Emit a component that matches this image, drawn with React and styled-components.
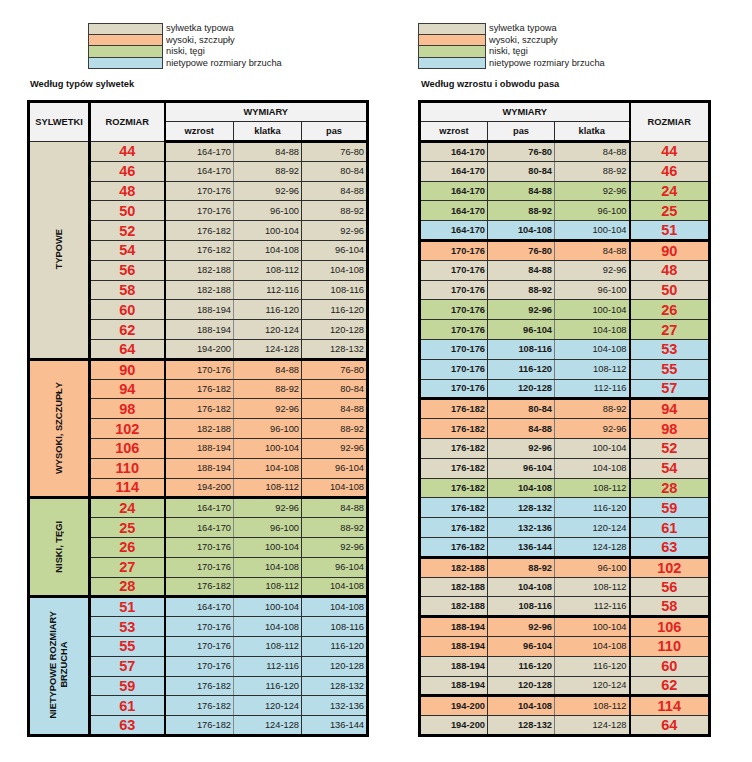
import styled, { createGlobalStyle } from 'styled-components';

const COLORS = {
  beige: '#ddd9c4',
  orange: '#f9be92',
  green: '#c4d79b',
  blue: '#b7dde8',
};

const legend = [
  { color: 'beige', label: 'sylwetka typowa' },
  { color: 'orange', label: 'wysoki, szczupły' },
  { color: 'green', label: 'niski, tęgi' },
  { color: 'blue', label: 'nietypowe rozmiary brzucha' },
];

// lewa tabela - wg typow sylwetek
const groups = [
  {
    name: ['TYPOWE'],
    color: 'beige',
    rows: [
      ['44', '164-170', '84-88', '76-80'],
      ['46', '164-170', '88-92', '80-84'],
      ['48', '170-176', '92-96', '84-88'],
      ['50', '170-176', '96-100', '88-92'],
      ['52', '176-182', '100-104', '92-96'],
      ['54', '176-182', '104-108', '96-104'],
      ['56', '182-188', '108-112', '104-108'],
      ['58', '182-188', '112-116', '108-116'],
      ['60', '188-194', '116-120', '116-120'],
      ['62', '188-194', '120-124', '120-128'],
      ['64', '194-200', '124-128', '128-132'],
    ],
  },
  {
    name: ['WYSOKI, SZCZUPŁY'],
    color: 'orange',
    rows: [
      ['90', '170-176', '84-88', '76-80'],
      ['94', '176-182', '88-92', '80-84'],
      ['98', '176-182', '92-96', '84-88'],
      ['102', '182-188', '96-100', '88-92'],
      ['106', '188-194', '100-104', '92-96'],
      ['110', '188-194', '104-108', '96-104'],
      ['114', '194-200', '108-112', '104-108'],
    ],
  },
  {
    name: ['NISKI, TĘGI'],
    color: 'green',
    rows: [
      ['24', '164-170', '92-96', '84-88'],
      ['25', '164-170', '96-100', '88-92'],
      ['26', '170-176', '100-104', '92-96'],
      ['27', '170-176', '104-108', '96-104'],
      ['28', '176-182', '108-112', '104-108'],
    ],
  },
  {
    name: ['NIETYPOWE ROZMIARY', 'BRZUCHA'],
    color: 'blue',
    rows: [
      ['51', '164-170', '100-104', '104-108'],
      ['53', '170-176', '104-108', '108-116'],
      ['55', '170-176', '108-112', '116-120'],
      ['57', '170-176', '112-116', '120-128'],
      ['59', '176-182', '116-120', '128-132'],
      ['61', '176-182', '120-124', '132-136'],
      ['63', '176-182', '124-128', '136-144'],
    ],
  },
];

// prawa tabela - wg wzrostu i pasa: [wzrost, pas, klatka, rozmiar, kolor]
const heightGroups = [
  [
    ['164-170', '76-80', '84-88', '44', 'beige'],
    ['164-170', '80-84', '88-92', '46', 'beige'],
    ['164-170', '84-88', '92-96', '24', 'green'],
    ['164-170', '88-92', '96-100', '25', 'green'],
    ['164-170', '104-108', '100-104', '51', 'blue'],
  ],
  [
    ['170-176', '76-80', '84-88', '90', 'orange'],
    ['170-176', '84-88', '92-96', '48', 'beige'],
    ['170-176', '88-92', '96-100', '50', 'beige'],
    ['170-176', '92-96', '100-104', '26', 'green'],
    ['170-176', '96-104', '104-108', '27', 'green'],
    ['170-176', '108-116', '104-108', '53', 'blue'],
    ['170-176', '116-120', '108-112', '55', 'blue'],
    ['170-176', '120-128', '112-116', '57', 'blue'],
  ],
  [
    ['176-182', '80-84', '88-92', '94', 'orange'],
    ['176-182', '84-88', '92-96', '98', 'orange'],
    ['176-182', '92-96', '100-104', '52', 'beige'],
    ['176-182', '96-104', '104-108', '54', 'beige'],
    ['176-182', '104-108', '108-112', '28', 'green'],
    ['176-182', '128-132', '116-120', '59', 'blue'],
    ['176-182', '132-136', '120-124', '61', 'blue'],
    ['176-182', '136-144', '124-128', '63', 'blue'],
  ],
  [
    ['182-188', '88-92', '96-100', '102', 'orange'],
    ['182-188', '104-108', '108-112', '56', 'beige'],
    ['182-188', '108-116', '112-116', '58', 'beige'],
  ],
  [
    ['188-194', '92-96', '100-104', '106', 'orange'],
    ['188-194', '96-104', '104-108', '110', 'orange'],
    ['188-194', '116-120', '116-120', '60', 'beige'],
    ['188-194', '120-128', '120-124', '62', 'beige'],
  ],
  [
    ['194-200', '104-108', '108-112', '114', 'orange'],
    ['194-200', '128-132', '124-128', '64', 'beige'],
  ],
];

function Legend({ offset, swatch }) {
  return (
    <SLegend $offset={offset} $swatch={swatch}>
      {legend.map((item) => (
        <SLegendRow key={item.label}>
          <SSwatch $color={COLORS[item.color]} />
          <SLegendText>{item.label}</SLegendText>
        </SLegendRow>
      ))}
    </SLegend>
  );
}

function TypeTable() {
  return (
    <STable $width={339}>
      <colgroup>
        <col style={{ width: 61 }} />
        <col style={{ width: 75 }} />
        <col style={{ width: 69 }} />
        <col style={{ width: 68 }} />
        <col style={{ width: 66 }} />
      </colgroup>
      <thead>
        <SHeadRow>
          <STh rowSpan={2} $right='3px'>SYLWETKI</STh>
          <STh rowSpan={2} $right='2px'>ROZMIAR</STh>
          <STh colSpan={3}>WYMIARY</STh>
        </SHeadRow>
        <SHeadRow>
          <STh $bottom='3px'>wzrost</STh>
          <STh $bottom='3px'>klatka</STh>
          <STh $bottom='3px'>pas</STh>
        </SHeadRow>
      </thead>
      <tbody>
        {groups.map((group) =>
          group.rows.map((row, i) => {
            const last = i === group.rows.length - 1;
            const bg = COLORS[group.color];
            return (
              <SRow key={row[0]} $bg={bg}>
                {i === 0 && (
                  <SGroupCell rowSpan={group.rows.length}>
                    <SVertical>
                      {group.name.map((line) => (
                        <span key={line}>{line}</span>
                      ))}
                    </SVertical>
                  </SGroupCell>
                )}
                <SSize $last={last} $left='3px' $right='2px'>
                  {row[0]}
                </SSize>
                <STd $last={last} $rightColor='#8a8a8a'>
                  {row[1]}
                </STd>
                <STd $last={last}>{row[2]}</STd>
                <STd $last={last}>{row[3]}</STd>
              </SRow>
            );
          })
        )}
      </tbody>
    </STable>
  );
}

function HeightTable() {
  return (
    <STable $width={290}>
      <colgroup>
        <col style={{ width: 68 }} />
        <col style={{ width: 67 }} />
        <col style={{ width: 75 }} />
        <col style={{ width: 80 }} />
      </colgroup>
      <thead>
        <SHeadRow>
          <STh colSpan={3}>WYMIARY</STh>
          <STh rowSpan={2} $left='2px'>
            ROZMIAR
          </STh>
        </SHeadRow>
        <SHeadRow>
          <STh $bottom='3px'>wzrost</STh>
          <STh $bottom='3px'>pas</STh>
          <STh $bottom='3px'>klatka</STh>
        </SHeadRow>
      </thead>
      <tbody>
        {heightGroups.map((group) =>
          group.map((row, i) => {
            const last = i === group.length - 1;
            return (
              <SRow key={row[3]} $bg={COLORS[row[4]]}>
                <STd $last={last} $bold>
                  {row[0]}
                </STd>
                <STd $last={last} $bold $rightColor='#7a7a7a'>
                  {row[1]}
                </STd>
                <STd $last={last}>{row[2]}</STd>
                <SSize $last={last} $left='2px'>
                  {row[3]}
                </SSize>
              </SRow>
            );
          })
        )}
      </tbody>
    </STable>
  );
}

export default function App() {
  return (
    <>
      <GlobalStyle />
      <SPage>
        <SColumn $width={341}>
          <Legend offset={61} swatch={75} />
          <SHeading>Według typów sylwetek</SHeading>
          <TypeTable />
        </SColumn>
        <SColumn $width={292}>
          <Legend offset={0} swatch={68} />
          <SHeading>Według wzrostu i obwodu pasa</SHeading>
          <HeightTable />
        </SColumn>
      </SPage>
    </>
  );
}

const GlobalStyle = createGlobalStyle`
  body {
    margin: 0;
    background: #fff;
    font-family: 'Liberation Sans', Arial, sans-serif;
    color: #1c1c1c;
  }
`;

const SPage = styled.div`
  display: flex;
  gap: 50px;
  padding: 23px 0 0 27px;
  width: 752px;
  height: 762px;
  box-sizing: border-box;
`;

const SColumn = styled.div`
  display: flex;
  flex-direction: column;
  width: ${(p) => p.$width}px;
`;

const SLegend = styled.div`
  display: flex;
  flex-direction: column;
  margin-left: ${(p) => p.$offset}px;
  --swatch: ${(p) => p.$swatch}px;
`;

const SLegendRow = styled.div`
  display: flex;
  align-items: center;
  height: 11.5px;
`;

const SSwatch = styled.div`
  width: var(--swatch);
  height: 12.5px;
  margin-top: -1px;
  box-sizing: border-box;
  border: 1px solid #3c3c3c;
  background: ${(p) => p.$color};
  flex-shrink: 0;
  ${SLegendRow}:first-child & {
    margin-top: 0;
    height: 11.5px;
  }
`;

const SLegendText = styled.span`
  font-size: 9.3px;
  line-height: 11.5px;
  margin-left: 3px;
  color: #222;
  white-space: nowrap;
`;

const SHeading = styled.div`
  font-size: 9.3px;
  font-weight: bold;
  line-height: 14px;
  margin: 8px 0 9px 3px;
  color: #111;
`;

const STable = styled.table`
  width: ${(p) => p.$width}px;
  table-layout: fixed;
  border-collapse: collapse;
  border: 3px solid #000;
  font-size: 9.3px;
`;

const SHeadRow = styled.tr`
  height: 20px;
  background: #f2f2f2;
`;

const STh = styled.th`
  padding: 0;
  font-weight: bold;
  font-size: 9.3px;
  text-align: center;
  vertical-align: middle;
  color: #111;
  border: 1px solid #2a2a2a;
  ${(p) => p.$bottom && `border-bottom: ${p.$bottom} solid #000;`}
  ${(p) => p.$right && `border-right: ${p.$right} solid #000;`}
  ${(p) => p.$left && `border-left: ${p.$left} solid #000;`}
`;

const SRow = styled.tr`
  height: 19.8px;
  background: ${(p) => p.$bg};
`;

const STd = styled.td`
  padding: 0 2px 0 0;
  text-align: right;
  white-space: nowrap;
  font-weight: ${(p) => (p.$bold ? 'bold' : 'normal')};
  color: #1a1a1a;
  border-top: 1px solid #2e2e2e;
  border-bottom: ${(p) => (p.$last ? '3px solid #000' : '1px solid #2e2e2e')};
  border-left: 1px solid #2e2e2e;
  border-right: 1px solid ${(p) => p.$rightColor || '#2e2e2e'};
`;

const SSize = styled.td`
  padding: 0;
  text-align: center;
  font-weight: bold;
  font-size: 14.5px;
  line-height: 16px;
  color: #e2231f;
  border-top: 1px solid #2e2e2e;
  border-bottom: ${(p) => (p.$last ? '3px solid #000' : '1px solid #2e2e2e')};
  border-left: ${(p) => p.$left || '1px'} solid #000;
  border-right: ${(p) => p.$right || '1px'} solid #000;
`;

const SGroupCell = styled.td`
  padding: 0;
  text-align: center;
  vertical-align: middle;
  border-right: 3px solid #000;
  border-bottom: 3px solid #000;
`;

const SVertical = styled.div`
  display: inline-flex;
  flex-direction: column;
  align-items: center;
  writing-mode: vertical-rl;
  transform: rotate(180deg);
  font-weight: bold;
  font-size: 9.3px;
  line-height: 11px;
  color: #111;
  white-space: nowrap;
`;
